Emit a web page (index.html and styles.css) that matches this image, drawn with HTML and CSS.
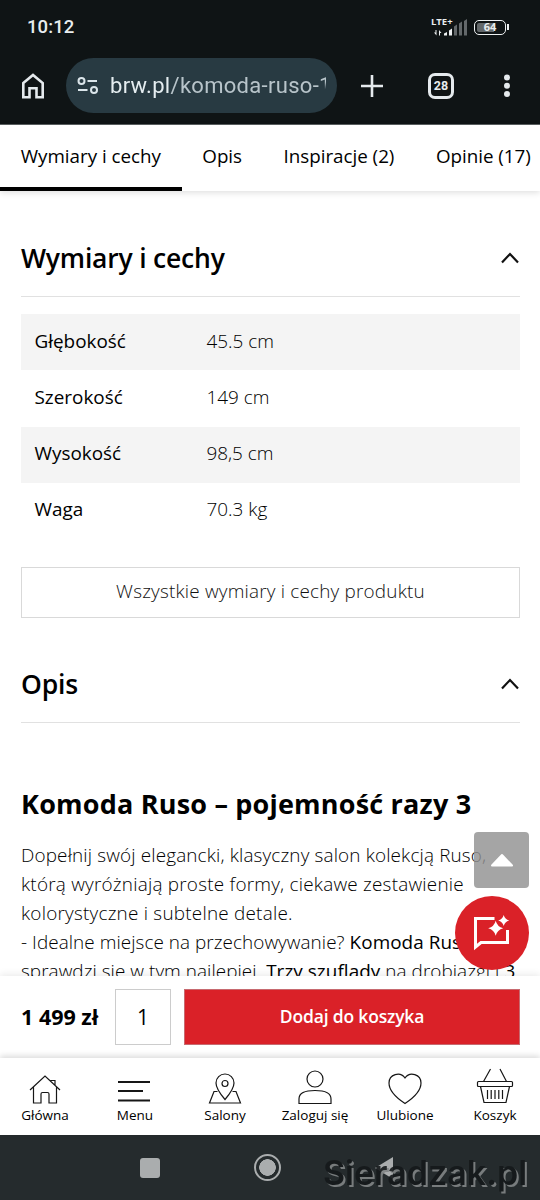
FILE: index.html
```html
<!DOCTYPE html>
<html lang="pl">
<head>
<meta charset="utf-8">
<title>Komoda Ruso</title>
<link rel="stylesheet" href="styles.css">
</head>
<body>
<div class="phone">
  <header class="browser">
    <div class="status">
      <span class="clock">10:12</span>
      <div class="signal">
        <span class="lte">LTE+</span>
        <svg class="bars" width="37" height="17" viewBox="0 0 37 17"><g fill="#eef1f2"><path d="M4.500 11v5.500L2 13.500h1.500V11zM7 16.500V11l2.500 3H8v2.500z"/><path d="M12 14.500l3-1.500v3.500h-3zM17 11.500l3-2v7h-3z"/></g><g fill="#63686a"><path d="M22 7.500l3-2v11h-3zM27 4.500l3-2v14h-3zM32 2l3-2v16.500h-3z"/></g></svg>
      </div>
      <div class="battery"><span class="battery-text">64</span></div>
    </div>
    <div class="toolbar">
      <svg class="home" width="26" height="28" viewBox="0 0 26 28" fill="none" stroke="#e5eaed" stroke-width="2.600"><path d="M3.300 11L13 3l9.700 8v14.200h-6.200v-9h-7v9H3.300z"/></svg>
      <div class="address">
        <svg width="24" height="20" viewBox="0 0 24 20" fill="none" stroke="#dbe5ea" stroke-width="2"><circle cx="5.500" cy="5" r="3"/><path d="M11.500 5H21M2 14h9.500"/><circle cx="18" cy="14" r="3"/></svg>
        <span class="url"><span class="host">brw.pl</span>/komoda-ruso-1</span>
      </div>
      <svg class="plus" width="24" height="24" viewBox="0 0 24 24" stroke="#e5eaed" stroke-width="2.600"><path d="M1 12h22M12 1v22"/></svg>
      <span class="tab-count">28</span>
      <svg class="dots" width="8" height="24" viewBox="0 0 8 24" fill="#e5eaed"><circle cx="4" cy="3.500" r="3"/><circle cx="4" cy="11.700" r="3"/><circle cx="4" cy="20" r="3"/></svg>
    </div>
  </header>

  <nav class="tabs">
    <a class="tab tab-active">Wymiary i cechy</a>
    <a class="tab">Opis</a>
    <a class="tab">Inspiracje (2)</a>
    <a class="tab">Opinie (17)</a>
  </nav>

  <main class="content">
    <div class="section-head">
      <h2 class="section-title">Wymiary i cechy</h2>
      <svg width="20" height="14" viewBox="0 0 20 14" fill="none" stroke="#111" stroke-width="2.200"><path d="M2 11.500l8-8.500 8 8.500"/></svg>
    </div>
    <dl class="specs">
      <div class="spec"><dt>Głębokość</dt><dd>45.5 cm</dd></div>
      <div class="spec"><dt>Szerokość</dt><dd>149 cm</dd></div>
      <div class="spec"><dt>Wysokość</dt><dd>98,5 cm</dd></div>
      <div class="spec"><dt>Waga</dt><dd>70.3 kg</dd></div>
    </dl>
    <button class="all-specs">Wszystkie wymiary i cechy produktu</button>
    <div class="section-head section-head-second">
      <h2 class="section-title">Opis</h2>
      <svg width="20" height="14" viewBox="0 0 20 14" fill="none" stroke="#111" stroke-width="2.200"><path d="M2 11.500l8-8.500 8 8.500"/></svg>
    </div>
    <h3 class="headline">Komoda Ruso – pojemność razy 3</h3>
    <p class="copy">
      <span class="line">Dopełnij swój elegancki, klasyczny salon kolekcją Ruso,</span>
      <span class="line line-wide">którą wyróżniają proste formy, ciekawe zestawienie</span>
      <span class="line line-wide">kolorystyczne i subtelne detale.</span>
      <span class="line line-tight">- Idealne miejsce na przechowywanie? <b>Komoda Ruso</b></span>
      <span class="line line-tight">sprawdzi się w tym najlepiej. <b>Trzy szuflady</b> na drobiazgi i <b>3</b></span>
    </p>
  </main>

  <div class="cart-bar">
    <strong class="price">1 499 zł</strong>
    <span class="qty">1</span>
    <button class="buy">Dodaj do koszyka</button>
  </div>

  <nav class="bottom-nav">
    <a class="item"><svg width="40" height="36" viewBox="0 0 40 36"><path d="M5 18L20 4l15 14M8.500 15v16h7.500v-9q0-1.500 1.500-1.500h5q1.500 0 1.500 1.500v9h7.500V15M25.500 8.500h4.500v5"/></svg><span>Główna</span></a>
    <a class="item"><svg class="heavy" width="40" height="36" viewBox="0 0 40 36"><path d="M3 10h32M3 19h25M3 28.500h32"/></svg><span>Menu</span></a>
    <a class="item"><svg width="40" height="36" viewBox="0 0 40 36"><path d="M20 27.500Q11 17 11 11a9 9 0 0 1 18 0q0 6-9 16.500z"/><circle cx="20" cy="11.500" r="3"/><path d="M12.500 19.500H9L4.500 31h31L31 19.500h-3.500"/></svg><span>Salony</span></a>
    <a class="item"><svg width="40" height="36" viewBox="0 0 40 36"><circle cx="20" cy="7" r="8"/><path d="M4 31.500V27q0-8.500 16-8.500T36 27v4.500z"/></svg><span>Zaloguj się</span></a>
    <a class="item"><svg width="40" height="36" viewBox="0 0 40 36"><path d="M20 31.500Q4 21 4 11a8.800 8.800 0 0 1 16-5 8.800 8.800 0 0 1 16 5q0 10-16 20.500z"/></svg><span>Ulubione</span></a>
    <a class="item"><svg width="40" height="36" viewBox="0 0 40 36"><rect x="2.500" y="9.500" width="35" height="5" rx="1"/><path d="M5.500 14.500L9 30.500h22l3.500-16M8.500 9.500L15.500-3M31.500 9.500L25-3M12.500 18v9M16.200 18v9M20 18v9M23.800 18v9M27.500 18v9"/></svg><span>Koszyk</span></a>
  </nav>

  <footer class="system">
    <span class="recent"></span>
    <span class="circle"></span>
    <svg class="back" width="20" height="24" viewBox="0 0 20 24"><path d="M1 12L19 1v22z" fill="#aaadae"/></svg>
    <span class="watermark">Sieradzak.pl</span>
  </footer>

  <div class="to-top"><svg width="24" height="14" viewBox="0 0 24 14"><path d="M2 12.500L12 2l10 10.500z" fill="#fff" stroke="#fff" stroke-width="2" stroke-linejoin="round"/></svg></div>
  <div class="chat"><svg width="40" height="40" viewBox="0 0 40 40"><path d="M22.500 5.500h-19V34l5.500-4.500h26.500V17" fill="none" stroke="#fff" stroke-width="3"/><path d="M23.700 7.800q1.500 6 7.500 7.500-6 1.500-7.500 7.500-1.500-6-7.500-7.500 6-1.500 7.500-7.500zM31.700 2q1.200 4.300 5.500 5.500-4.300 1.200-5.500 5.500-1.200-4.300-5.500-5.500 4.300-1.200 5.500-5.500z" fill="#fff"/></svg></div>
</div>
</body>
</html>
```
FILE: styles.css
```css
* { box-sizing: border-box; }
body, h2, h3, p, dl, dd { margin: 0; }
body { width: 540px; height: 1200px; overflow: hidden; }
button { font: inherit; padding: 0; border-radius: 0; }
.phone {
  position: relative;
  width: 540px;
  height: 1200px;
  display: flex;
  flex-direction: column;
  overflow: hidden;
  background: #fff;
  color: #000;
  font-family: "Open Sans", "Noto Sans", sans-serif;
}

/* Browser chrome */
.browser { height: 125px; flex: none; background: #0f1415; border-bottom: 1px solid #5b6061; font-family: Roboto, sans-serif; color: #e8edef; }
.status { height: 57px; display: flex; align-items: center; padding: 0 34px 3px 27px; }
.clock { font-size: 18.500px; font-weight: 500; letter-spacing: .1px; margin-right: auto; }
.signal { width: 42px; height: 17px; margin-right: 1px; position: relative; }
.lte { position: absolute; left: 0; top: -3px; font: 700 9.500px/12px "Open Sans", sans-serif; }
.bars { position: absolute; right: 4px; top: 0; }
.battery { position: relative; width: 32px; height: 15px; border: 1.500px solid #eef1f2; border-radius: 5px; background: linear-gradient(90deg, #63686a 62%, transparent 62%); background-clip: content-box; padding: 2px; }
.battery::after { content: ""; position: absolute; right: -4px; top: 3.500px; width: 2px; height: 6px; background: #eef1f2; }
.battery-text { position: absolute; inset: 0; text-align: center; font: 700 11px/12px "Noto Sans", sans-serif; }
.toolbar { display: flex; align-items: center; height: 57px; padding-left: 20px; }
.address { display: flex; align-items: center; gap: 10px; width: 271px; height: 55px; margin-left: 20px; padding-left: 10px; border-radius: 28px; background: #283a42; }
.url {
  width: 216px;
  overflow: hidden;
  white-space: nowrap;
  font-size: 22px;
  letter-spacing: .300px;
  color: #b8c4ca;
  line-height: 30px;
  -webkit-mask-image: linear-gradient(135deg, #000 92%, transparent 95%);
  mask-image: linear-gradient(135deg, #000 92%, transparent 95%);
}
.host { color: #e5edf0; }
.plus { margin-left: 23px; }
.tab-count { width: 26px; height: 26px; margin-left: 44px; border: 3px solid #e5eaed; border-radius: 7px; font-size: 12.500px; font-weight: 700; line-height: 20px; text-align: center; }
.dots { margin-left: 49px; }

/* Product tabs */
.tabs { flex: none; display: flex; height: 66px; box-shadow: 0 2px 6px rgba(0,0,0,.12); position: relative; z-index: 1; white-space: nowrap; font-size: 18.800px; letter-spacing: -.020px; }
.tab { height: 66px; padding: 0 20.800px; line-height: 63px; }
.tab-active { width: 181.500px; border-bottom: 4px solid #000; }

/* Product details */
.content { flex: 1; min-height: 0; overflow: hidden; padding: 29px 20px 0 21px; }
.section-head { display: flex; justify-content: space-between; align-items: center; height: 77px; border-bottom: 1px solid #e1e1e1; }
.section-title { font-size: 26.500px; font-weight: 600; line-height: 40px; letter-spacing: -.200px; }
.section-head-second { margin-top: 28px; }
.specs { margin-top: 17px; margin-bottom: 28px; }
.spec { display: flex; align-items: center; height: 56.250px; padding: 0 0 3px 13.500px; font-size: 18.900px; }
.spec:nth-child(odd) { background: #f4f4f4; }
.spec dt { width: 172px; font-weight: 500; }
.spec dd { font-weight: 300; }
.all-specs { display: block; width: 100%; height: 51px; padding-bottom: 3px; border: 1px solid #d9d9d9; background: #fff; color: #111; font-weight: 300; font-size: 18.900px; letter-spacing: .200px; }
.headline { margin-top: 63px; font-size: 27px; font-weight: 700; line-height: 36px; letter-spacing: .200px; white-space: nowrap; }
.copy { margin-top: 19px; font-weight: 300; font-size: 18.900px; line-height: 28.900px; }
.line { display: block; white-space: nowrap; letter-spacing: .150px; }
.line-wide { letter-spacing: .230px; }
.line-tight { letter-spacing: .060px; }
.copy b { font-weight: 500; }

/* Purchase bar */
.cart-bar { flex: none; display: flex; align-items: center; height: 82px; padding: 0 20px 0 21px; background: #fff; box-shadow: 0 -2px 7px rgba(0,0,0,.08); position: relative; z-index: 2; }
.price { width: 94px; padding-bottom: 2px; font-size: 21.500px; white-space: nowrap; }
.qty { width: 56px; height: 56px; border: 1px solid #ccc; font-size: 21px; line-height: 54px; text-align: center; }
.buy { flex: 1; height: 56px; margin-left: 13px; padding-bottom: 2px; border: 1px solid #c76a70; background: #da2128; color: #fff; font-size: 17.500px; font-weight: 600; letter-spacing: -.180px; }

/* Bottom navigation */
.bottom-nav { flex: none; display: grid; grid-template-columns: repeat(6, 90px); height: 77px; background: #fff; box-shadow: 0 -2px 6px rgba(0,0,0,.15); position: relative; z-index: 3; }
.item { display: flex; flex-direction: column; align-items: center; padding-top: 14px; font-size: 13.500px; line-height: 14px; white-space: nowrap; }
.item svg { overflow: visible; fill: none; stroke: #161616; stroke-width: 1.200; }
.item .heavy { stroke-width: 2; }

/* System keys */
.system { flex: none; height: 65px; background: #252b2d; display: flex; align-items: center; padding-left: 140px; position: relative; }
.recent { width: 20px; height: 20px; border-radius: 3px; background: #aaadae; }
.circle { width: 27px; height: 27px; margin-left: 94px; border: 2px solid #aaadae; border-radius: 50%; background: radial-gradient(circle, #aaadae 8px, transparent 8.600px); }
.back { margin-left: 93px; }
.watermark { position: absolute; left: 323px; top: 18px; font: 600 34px/40px Inter, sans-serif; color: #15191b; text-shadow: 2px 2px 0 #818586; white-space: nowrap; opacity: .9; }

/* Floating controls */
.to-top { position: absolute; z-index: 2; left: 474px; top: 832px; width: 55px; height: 56px; border-radius: 4px; background: rgba(145,145,145,.82); display: grid; place-items: center; }
.chat { position: absolute; z-index: 2; left: 455px; top: 896px; width: 74px; height: 74px; border-radius: 50%; background: #da2128; display: grid; place-items: center; }
```
